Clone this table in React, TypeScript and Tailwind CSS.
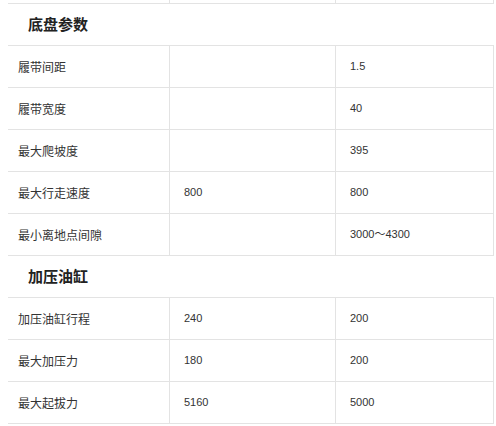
import React from "react";

type Row =
  | { kind: "section"; title: string }
  | { kind: "data"; label: string; a: string; b: string };

const rows: Row[] = [
  { kind: "section", title: "底盘参数" },
  { kind: "data", label: "履带间距", a: "", b: "1.5" },
  { kind: "data", label: "履带宽度", a: "", b: "40" },
  { kind: "data", label: "最大爬坡度", a: "", b: "395" },
  { kind: "data", label: "最大行走速度", a: "800", b: "800" },
  { kind: "data", label: "最小离地点间隙", a: "", b: "3000～4300" },
  { kind: "section", title: "加压油缸" },
  { kind: "data", label: "加压油缸行程", a: "240", b: "200" },
  { kind: "data", label: "最大加压力", a: "180", b: "200" },
  { kind: "data", label: "最大起拔力", a: "5160", b: "5000" },
];

const cjk = "font-['Noto_Sans_CJK_SC','Liberation_Sans',sans-serif]";
const num = "font-['Liberation_Sans','Noto_Sans_CJK_SC',sans-serif]";

const App = () => {
  return (
    <div className="w-[496px] h-[426px] bg-white overflow-hidden">
      <div className="ml-2 w-[486px]">
        {/* cut-off row above */}
        <div className="grid grid-cols-[162px_166px_158px] h-[4px] border-b border-[#e3e3e3]">
          <div className="border-r border-[#e3e3e3]" />
          <div className="border-r border-[#e3e3e3]" />
          <div className="border-r border-[#e3e3e3]" />
        </div>

        {rows.map((r, i) =>
          r.kind === "section" ? (
            <div
              key={i}
              className={`h-[42px] border-b border-[#e3e3e3] flex items-center pl-5 text-[15px] font-bold text-[#222] ${cjk}`}>
              {r.title}
            </div>
          ) : (
            <div
              key={i}
              className="grid grid-cols-[162px_166px_158px] h-[42px] border-b border-[#e3e3e3]">
              <div className={`border-r border-[#e3e3e3] flex items-center pl-[10px] text-[12px] text-[#333] ${cjk}`}>
                {r.label}
              </div>
              <div className={`border-r border-[#e3e3e3] flex items-center pl-[14px] text-[11px] text-[#333] ${num}`}>
                {r.a}
              </div>
              <div className={`border-r border-[#e3e3e3] flex items-center pl-[14px] text-[11px] text-[#333] ${num}`}>
                {r.b}
              </div>
            </div>
          )
        )}
      </div>
    </div>
  );
};

export default App;
